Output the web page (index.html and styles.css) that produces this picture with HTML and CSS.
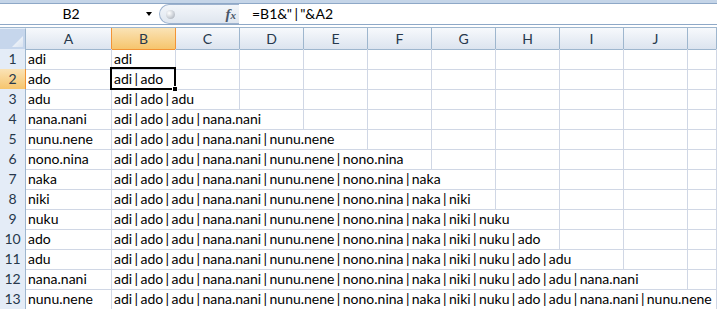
FILE: index.html
```html
<!DOCTYPE html>
<html>
<head>
<meta charset="utf-8">
<link rel="stylesheet" href="styles.css">
</head>
<body>
<div class="topband"></div>
<div class="fbar">
  <div class="namebox"><span class="nb-text">B2</span><span class="nb-arrow"></span></div>
  <div class="pill"><span class="knob"></span><span class="fx"><span class="fx-f">f</span><span class="fx-x">x</span></span></div>
  <div class="formula">=B1&amp;"<i>|</i>"&amp;A2</div>
</div>
<div class="gap"></div>
<div class="sheet">
  <div class="row hrow">
    <div class="corner"><svg width="11" height="11" viewBox="0 0 11 11"><defs><linearGradient id="tg" x1="0" y1="0" x2="1" y2="1"><stop offset="0" stop-color="#fdfeff"/><stop offset="1" stop-color="#d9e3f0"/></linearGradient></defs><polygon points="11,0 11,11 0,11" fill="url(#tg)"/></svg></div>
    <div class="ch ch-a">A</div><div class="ch sel">B</div><div class="ch">C</div><div class="ch">D</div><div class="ch">E</div><div class="ch">F</div><div class="ch">G</div><div class="ch">H</div><div class="ch">I</div><div class="ch">J</div><div class="ch"></div>
  </div>
  <div class="row r1"><div class="rh">1</div><div class="c">adi</div><div class="c s1">adi</div><div class="c"></div><div class="c"></div><div class="c"></div><div class="c"></div><div class="c"></div><div class="c"></div><div class="c"></div><div class="c"></div><div class="c"></div></div>
  <div class="row"><div class="rh sel">2</div><div class="c">ado</div><div class="c s1 active">adi<i>|</i>ado<span class="handle"></span></div><div class="c"></div><div class="c"></div><div class="c"></div><div class="c"></div><div class="c"></div><div class="c"></div><div class="c"></div><div class="c"></div><div class="c"></div></div>
  <div class="row"><div class="rh">3</div><div class="c">adu</div><div class="c s2">adi<i>|</i>ado<i>|</i>adu</div><div class="c"></div><div class="c"></div><div class="c"></div><div class="c"></div><div class="c"></div><div class="c"></div><div class="c"></div><div class="c"></div></div>
  <div class="row"><div class="rh">4</div><div class="c">nana.nani</div><div class="c s3">adi<i>|</i>ado<i>|</i>adu<i>|</i>nana.nani</div><div class="c"></div><div class="c"></div><div class="c"></div><div class="c"></div><div class="c"></div><div class="c"></div><div class="c"></div></div>
  <div class="row"><div class="rh">5</div><div class="c">nunu.nene</div><div class="c s4">adi<i>|</i>ado<i>|</i>adu<i>|</i>nana.nani<i>|</i>nunu.nene</div><div class="c"></div><div class="c"></div><div class="c"></div><div class="c"></div><div class="c"></div><div class="c"></div></div>
  <div class="row"><div class="rh">6</div><div class="c">nono.nina</div><div class="c s5">adi<i>|</i>ado<i>|</i>adu<i>|</i>nana.nani<i>|</i>nunu.nene<i>|</i>nono.nina</div><div class="c"></div><div class="c"></div><div class="c"></div><div class="c"></div><div class="c"></div></div>
  <div class="row"><div class="rh">7</div><div class="c">naka</div><div class="c s6">adi<i>|</i>ado<i>|</i>adu<i>|</i>nana.nani<i>|</i>nunu.nene<i>|</i>nono.nina<i>|</i>naka</div><div class="c"></div><div class="c"></div><div class="c"></div><div class="c"></div></div>
  <div class="row"><div class="rh">8</div><div class="c">niki</div><div class="c s6">adi<i>|</i>ado<i>|</i>adu<i>|</i>nana.nani<i>|</i>nunu.nene<i>|</i>nono.nina<i>|</i>naka<i>|</i>niki</div><div class="c"></div><div class="c"></div><div class="c"></div><div class="c"></div></div>
  <div class="row"><div class="rh">9</div><div class="c">nuku</div><div class="c s7">adi<i>|</i>ado<i>|</i>adu<i>|</i>nana.nani<i>|</i>nunu.nene<i>|</i>nono.nina<i>|</i>naka<i>|</i>niki<i>|</i>nuku</div><div class="c"></div><div class="c"></div><div class="c"></div></div>
  <div class="row"><div class="rh">10</div><div class="c">ado</div><div class="c s7">adi<i>|</i>ado<i>|</i>adu<i>|</i>nana.nani<i>|</i>nunu.nene<i>|</i>nono.nina<i>|</i>naka<i>|</i>niki<i>|</i>nuku<i>|</i>ado</div><div class="c"></div><div class="c"></div><div class="c"></div></div>
  <div class="row"><div class="rh">11</div><div class="c">adu</div><div class="c s8">adi<i>|</i>ado<i>|</i>adu<i>|</i>nana.nani<i>|</i>nunu.nene<i>|</i>nono.nina<i>|</i>naka<i>|</i>niki<i>|</i>nuku<i>|</i>ado<i>|</i>adu</div><div class="c"></div><div class="c"></div></div>
  <div class="row"><div class="rh">12</div><div class="c">nana.nani</div><div class="c s9">adi<i>|</i>ado<i>|</i>adu<i>|</i>nana.nani<i>|</i>nunu.nene<i>|</i>nono.nina<i>|</i>naka<i>|</i>niki<i>|</i>nuku<i>|</i>ado<i>|</i>adu<i>|</i>nana.nani</div><div class="c"></div></div>
  <div class="row"><div class="rh">13</div><div class="c">nunu.nene</div><div class="c s10">adi<i>|</i>ado<i>|</i>adu<i>|</i>nana.nani<i>|</i>nunu.nene<i>|</i>nono.nina<i>|</i>naka<i>|</i>niki<i>|</i>nuku<i>|</i>ado<i>|</i>adu<i>|</i>nana.nani<i>|</i>nunu.nene</div></div>
</div>
</body>
</html>
```

FILE: styles.css
```css
* { box-sizing: border-box; }
html, body { margin: 0; padding: 0; }
body {
  width: 717px;
  height: 309px;
  overflow: hidden;
  background: #fff;
  font-family: Lato, "Noto Sans", sans-serif;
  font-size: 14px;
  color: #000;
}
i { font-style: normal; padding: 0 2.4px; }
.topband {
  height: 4px;
  background: #c5d5e8;
  border-bottom: 1px solid #8ea8c7;
}
.fbar {
  display: flex;
  height: 21px;
  border-bottom: 1px solid #8ea8c7;
  background: #fff;
}
.namebox {
  width: 159px;
  display: flex;
  align-items: flex-start;
}
.nb-text {
  width: 142px;
  text-align: center;
  line-height: 20px;
}
.nb-arrow {
  width: 0;
  height: 0;
  border-left: 3.5px solid transparent;
  border-right: 3.5px solid transparent;
  border-top: 4px solid #000;
  margin: 8px 0 0 4px;
}
.pill {
  width: 80px;
  height: 20px;
  border: 1px solid #9db2ce;
  border-right: none;
  border-radius: 10px 0 0 10px;
  background: linear-gradient(#f3f6fa, #dfe6ef);
  display: flex;
  align-items: center;
  justify-content: space-between;
  padding: 0 3px 0 6px;
}
.knob {
  width: 9px;
  height: 9px;
  border-radius: 50%;
  background: radial-gradient(circle at 35% 35%, #ffffff 0%, #d4d8de 45%, #9ca3ad 100%);
}
.fx {
  font-family: "Liberation Serif", serif;
  font-style: italic;
  font-weight: bold;
  color: #4a5668;
  font-size: 15px;
  line-height: 18px;
}
.fx-x { font-size: 11px; }
.formula {
  flex: 1;
  padding-left: 13px;
  line-height: 20px;
  white-space: nowrap;
}
.gap { height: 2px; }
.row {
  display: grid;
  grid-template-columns: 26px 86px repeat(9, 64px) 1fr;
  height: 20px;
}
.hrow {
  height: 22px;
  border-top: 1px solid #9eb6ce;
}
.corner {
  background: #c6d6ec;
  border-right: 1px solid #9eb6ce;
  border-bottom: 1px solid #9eb6ce;
  border-top: 1px solid #e6eef8;
  display: flex;
  align-items: flex-end;
  justify-content: flex-end;
  padding: 0 2px 2px 0;
}
.corner svg { display: block; }
.ch {
  background: linear-gradient(#f7f9fc, #dce4ef);
  border-right: 1px solid #9eb6ce;
  border-bottom: 1px solid #9eb6ce;
  color: #27384c;
  text-align: center;
  line-height: 21px;
}
.ch-a { border-right-color: #f29436; }
.ch.sel {
  background: linear-gradient(#fae3b6, #f6c56d);
  border-right-color: #f29436;
  border-bottom-color: #f29436;
}
.rh {
  background: #e4ecf7;
  border-right: 1px solid #9eb6ce;
  border-bottom: 1px solid #b7c8dd;
  color: #27384c;
  text-align: center;
  line-height: 19px;
}
.r1 .rh { border-bottom-color: #f29436; }
.rh.sel {
  background: linear-gradient(#fae3b6, #f6c56d);
  border-right-color: #f29436;
  border-bottom-color: #f29436;
}
.c {
  border-right: 1px solid #d0d7e5;
  border-bottom: 1px solid #d0d7e5;
  padding-left: 2px;
  line-height: 20px;
  white-space: nowrap;
  position: relative;
}
.s1 { grid-column: span 1; }
.s2 { grid-column: span 2; }
.s3 { grid-column: span 3; }
.s4 { grid-column: span 4; }
.s5 { grid-column: span 5; }
.s6 { grid-column: span 6; }
.s7 { grid-column: span 7; }
.s8 { grid-column: span 8; }
.s9 { grid-column: span 9; }
.s10 { grid-column: span 10; }
.active { z-index: 5; }
.active::before {
  content: "";
  position: absolute;
  left: -2px;
  top: -2px;
  right: -1px;
  bottom: -1px;
  border: 2px solid #000;
  pointer-events: none;
}
.handle {
  position: absolute;
  right: -3px;
  bottom: -3px;
  width: 6px;
  height: 6px;
  background: #000;
  border: 1px solid #fff;
  z-index: 6;
}
```
